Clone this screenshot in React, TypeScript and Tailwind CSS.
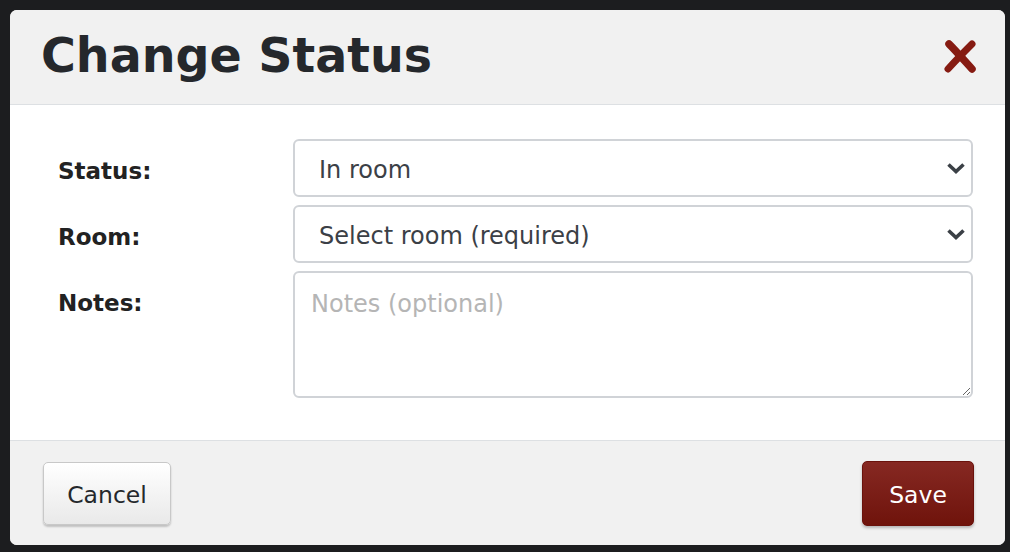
import { useState } from 'react';

const Chevron = () => (
  <svg width="20" height="12" viewBox="0 0 20 12" className="pointer-events-none absolute right-[7px] top-1/2 -translate-y-1/2">
    <path d="M2.5 2.5 L10 9.5 L17.5 2.5" fill="none" stroke="#3b4046" strokeWidth="3.6" />
  </svg>
);

const CloseX = () => (
  <svg width="34" height="34" viewBox="0 0 34 34">
    <path d="M6 5 C13 12, 20 20, 29 30" fill="none" stroke="#861b12" strokeWidth="7.5" strokeLinecap="round" />
    <path d="M29 5 C21 13, 14 20, 5 30" fill="none" stroke="#861b12" strokeWidth="7" strokeLinecap="round" />
  </svg>
);

export default function App() {
  const [status, setStatus] = useState('in');
  const [room, setRoom] = useState('');
  const [notes, setNotes] = useState('');

  return (
    <div className="w-[1010px] h-[552px] bg-[#1c1d1f] pt-[10px] pl-[10px] font-['DejaVu_Sans',sans-serif]">
      <div className="w-[995px] h-[535px] rounded-[7px] overflow-hidden flex flex-col bg-white">
        <div className="h-[95px] shrink-0 bg-[#f1f1f1] border-b border-[#dde0e3] flex items-center justify-between pl-[31px] pr-[28px]">
          <h1 className="text-[47.5px] font-bold text-[#25282c] leading-none pb-[2px]">Change Status</h1>
          <button className="p-0 mt-[-2px]"><CloseX /></button>
        </div>

        <div className="flex-1 pl-[48px] pr-[32px] pt-[34px] flex flex-col gap-[8px]">
          <div className="flex items-start">
            <label className="w-[235px] pt-[19px] text-[23px] leading-[26px] font-bold text-[#222]">Status:</label>
            <div className="relative flex-1">
              <select
                value={status}
                onChange={(e) => setStatus(e.target.value)}
                className="appearance-none w-full h-[58px] rounded-[6px] border-2 border-[#d0d3d7] bg-white pl-[24px] pt-[3px] text-[24px] text-[#3b4046] outline-none"
              >
                <option value="in">In room</option>
                <option value="out">Out</option>
              </select>
              <Chevron />
            </div>
          </div>
          <div className="flex items-start">
            <label className="w-[235px] pt-[19px] text-[23px] leading-[26px] font-bold text-[#222]">Room:</label>
            <div className="relative flex-1">
              <select
                value={room}
                onChange={(e) => setRoom(e.target.value)}
                className="appearance-none w-full h-[58px] rounded-[6px] border-2 border-[#d0d3d7] bg-white pl-[24px] pt-[3px] text-[24px] text-[#3b4046] outline-none"
              >
                <option value="">Select room (required)</option>
                <option value="1">Room 1</option>
              </select>
              <Chevron />
            </div>
          </div>
          <div className="flex items-start">
            <label className="w-[235px] pt-[19px] text-[23px] leading-[26px] font-bold text-[#222]">Notes:</label>
            <textarea
              value={notes}
              onChange={(e) => setNotes(e.target.value)}
              placeholder="Notes (optional)"
              className="flex-1 h-[127px] rounded-[6px] border-2 border-[#d0d3d7] bg-white px-[16px] pt-[17px] text-[24px] leading-[28px] text-[#3b4046] placeholder:text-[#b5b5b5] outline-none"
            />
          </div>
        </div>

        <div className="h-[105px] shrink-0 bg-[#f1f1f1] border-t border-[#dde0e3] flex items-center justify-between pl-[33px] pr-[31px]">
          <button className="w-[128px] h-[63px] pt-[5px] rounded-[5px] border border-[#c8c8c8] bg-gradient-to-b from-[#ffffff] to-[#e9e9e9] shadow-[0_2px_2px_rgba(0,0,0,0.2)] text-[23.5px] text-[#25282c]">
            Cancel
          </button>
          <button className="w-[112px] h-[65px] pt-[5px] rounded-[5px] border border-[#6a120c] bg-gradient-to-b from-[#862822] to-[#6f130b] shadow-[0_2px_3px_rgba(0,0,0,0.25)] text-[23.5px] text-white">
            Save
          </button>
        </div>
      </div>
    </div>
  );
}
